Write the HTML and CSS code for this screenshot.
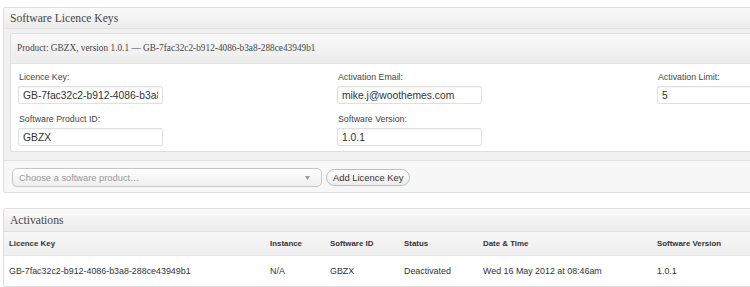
FILE: index.html
```html
<!DOCTYPE html>
<html>
<head>
<meta charset="utf-8">
<link rel="stylesheet" href="styles.css">
</head>
<body>
<div class="page">
  <div class="postbox keys">
    <h3 class="hndle">Software Licence Keys</h3>
    <div class="inside">
      <div class="keybox">
        <h4 class="keyhead">Product: GBZX, version 1.0.1 — GB-7fac32c2-b912-4086-b3a8-288ce43949b1</h4>
        <div class="keyfields">
          <div class="col">
            <div class="field">
              <label class="lbl">Licence Key:</label>
              <input class="txt" type="text" value="GB-7fac32c2-b912-4086-b3a8-288ce43949b1" readonly>
            </div>
            <div class="field">
              <label class="lbl">Software Product ID:</label>
              <input class="txt" type="text" value="GBZX" readonly>
            </div>
          </div>
          <div class="col">
            <div class="field">
              <label class="lbl">Activation Email:</label>
              <input class="txt" type="text" value="mike.j@woothemes.com" readonly>
            </div>
            <div class="field">
              <label class="lbl">Software Version:</label>
              <input class="txt" type="text" value="1.0.1" readonly>
            </div>
          </div>
          <div class="col">
            <div class="field">
              <label class="lbl">Activation Limit:</label>
              <input class="txt last" type="text" value="5" readonly>
            </div>
          </div>
        </div>
      </div>
      <div class="toolbar">
        <div class="select">
          <span class="placeholder">Choose a software product…</span>
          <svg class="arrow" width="5" height="4" viewBox="0 0 5 4"><path d="M0 0H5L2.5 4Z" fill="#9a9a9a"/></svg>
        </div>
        <button class="btn" type="button">Add Licence Key</button>
      </div>
    </div>
  </div>

  <div class="postbox acts">
    <h3 class="hndle">Activations</h3>
    <table class="grid">
      <colgroup>
        <col class="c1"><col class="c2"><col class="c3"><col class="c4"><col class="c5"><col class="c6">
      </colgroup>
      <thead>
        <tr>
          <th>Licence Key</th>
          <th>Instance</th>
          <th>Software ID</th>
          <th>Status</th>
          <th>Date &amp; Time</th>
          <th>Software Version</th>
        </tr>
      </thead>
      <tbody>
        <tr>
          <td>GB-7fac32c2-b912-4086-b3a8-288ce43949b1</td>
          <td>N/A</td>
          <td>GBZX</td>
          <td>Deactivated</td>
          <td>Wed 16 May 2012 at 08:46am</td>
          <td>1.0.1</td>
        </tr>
      </tbody>
    </table>
  </div>
</div>
</body>
</html>
```
FILE: styles.css
```css
html, body {
  margin: 0;
  padding: 0;
  background: #ffffff;
  overflow: hidden;
}
body {
  width: 750px;
  height: 287px;
  font-family: "Liberation Sans", Arial, sans-serif;
  color: #333333;
}
.page {
  padding: 7px 0 0 3px;
  width: 750px;
  box-sizing: border-box;
}
.postbox {
  border: 1px solid #dfdfdf;
  border-right: 0;
  border-radius: 3px 0 0 3px;
  background: #f5f5f5;
  box-sizing: border-box;
  width: 747px;
  overflow: hidden;
}
.hndle {
  margin: 0;
  height: 21px;
  box-sizing: border-box;
  padding: 0 0 0 6px;
  background: linear-gradient(#fafafa, #ececec);
  border-bottom: 1px solid #e2e2e2;
  font-family: "Liberation Serif", "Times New Roman", serif;
  font-weight: normal;
  font-size: 11.6px;
  line-height: 21px;
  color: #464646;
}
.inside {
  padding: 4px 0 0 6px;
  background: #f1f1f1;
}
.keybox {
  border: 1px solid #dfdfdf;
  border-right: 0;
  border-radius: 3px 0 0 3px;
  background: #ffffff;
}
.keyhead {
  margin: 0;
  height: 30px;
  box-sizing: border-box;
  padding: 0 0 0 6px;
  background: linear-gradient(#f9f9f9, #ececec);
  border-bottom: 1px solid #e4e4e4;
  font-family: "Liberation Serif", "Times New Roman", serif;
  font-weight: normal;
  font-size: 9.3px;
  line-height: 29px;
  color: #464646;
}
.keyfields {
  display: grid;
  grid-template-columns: 319px 320px 1fr;
  padding: 8px 0 5px 7px;
}
.col {
  display: flex;
  flex-direction: column;
  gap: 10px;
  min-width: 0;
}
.field {
  display: flex;
  flex-direction: column;
  gap: 3px;
}
.lbl {
  font-size: 8.8px;
  line-height: 11px;
  color: #464646;
  padding-left: 1px;
}
.txt {
  width: 145px;
  height: 18px;
  box-sizing: border-box;
  margin: 0;
  border: 1px solid #e0e0e0;
  border-radius: 2px;
  background: #ffffff;
  padding: 0 4px;
  font-family: "Liberation Sans", Arial, sans-serif;
  font-size: 10.3px;
  color: #333333;
  outline: none;
  box-shadow: inset 0 1px 1px rgba(0,0,0,0.03);
}
.txt.last {
  width: 100px;
  border-right: 0;
  border-radius: 2px 0 0 2px;
}
.toolbar {
  margin: 8px 0 0 -6px;
  border-top: 1px solid #e1e1e1;
  background: #f7f7f7;
  padding: 7px 0 5px 8px;
  display: flex;
  align-items: center;
  gap: 4px;
}
.select {
  width: 310px;
  height: 19px;
  box-sizing: border-box;
  border: 1px solid #c8c8c8;
  border-radius: 5px;
  background: linear-gradient(#ffffff, #eeeeee);
  display: flex;
  align-items: center;
  justify-content: space-between;
  padding: 0 11px 0 6px;
}
.placeholder {
  font-size: 9.3px;
  color: #999999;
}
.arrow {
  display: block;
}
.btn {
  height: 17px;
  box-sizing: border-box;
  margin: 0;
  padding: 0 6px;
  border: 1px solid #bdbdbd;
  border-radius: 9px;
  background: linear-gradient(#ffffff, #ececec);
  font-family: "Liberation Sans", Arial, sans-serif;
  font-size: 9.4px;
  color: #333333;
  line-height: 15px;
}
.acts {
  margin-top: 15px;
  background: #ffffff;
}
.acts .hndle {
  height: 23px;
  line-height: 23px;
  border-bottom: 1px solid #e2e2e2;
}
.grid {
  border-collapse: collapse;
  table-layout: fixed;
  width: 746px;
}
.c1 { width: 261px; }
.c2 { width: 60px; }
.c3 { width: 74px; }
.c4 { width: 79px; }
.c5 { width: 174px; }
.grid th {
  text-align: left;
  font-weight: bold;
  font-size: 7.9px;
  color: #333333;
  height: 23px;
  padding: 0 0 0 5px;
  background: linear-gradient(#f7f7f7, #eeeeee);
  border-bottom: 1px solid #e8e8e8;
  white-space: nowrap;
}
.grid td {
  text-align: left;
  font-size: 8.9px;
  color: #333333;
  height: 30px;
  padding: 0 0 0 5px;
  background: #ffffff;
  white-space: nowrap;
}
```
